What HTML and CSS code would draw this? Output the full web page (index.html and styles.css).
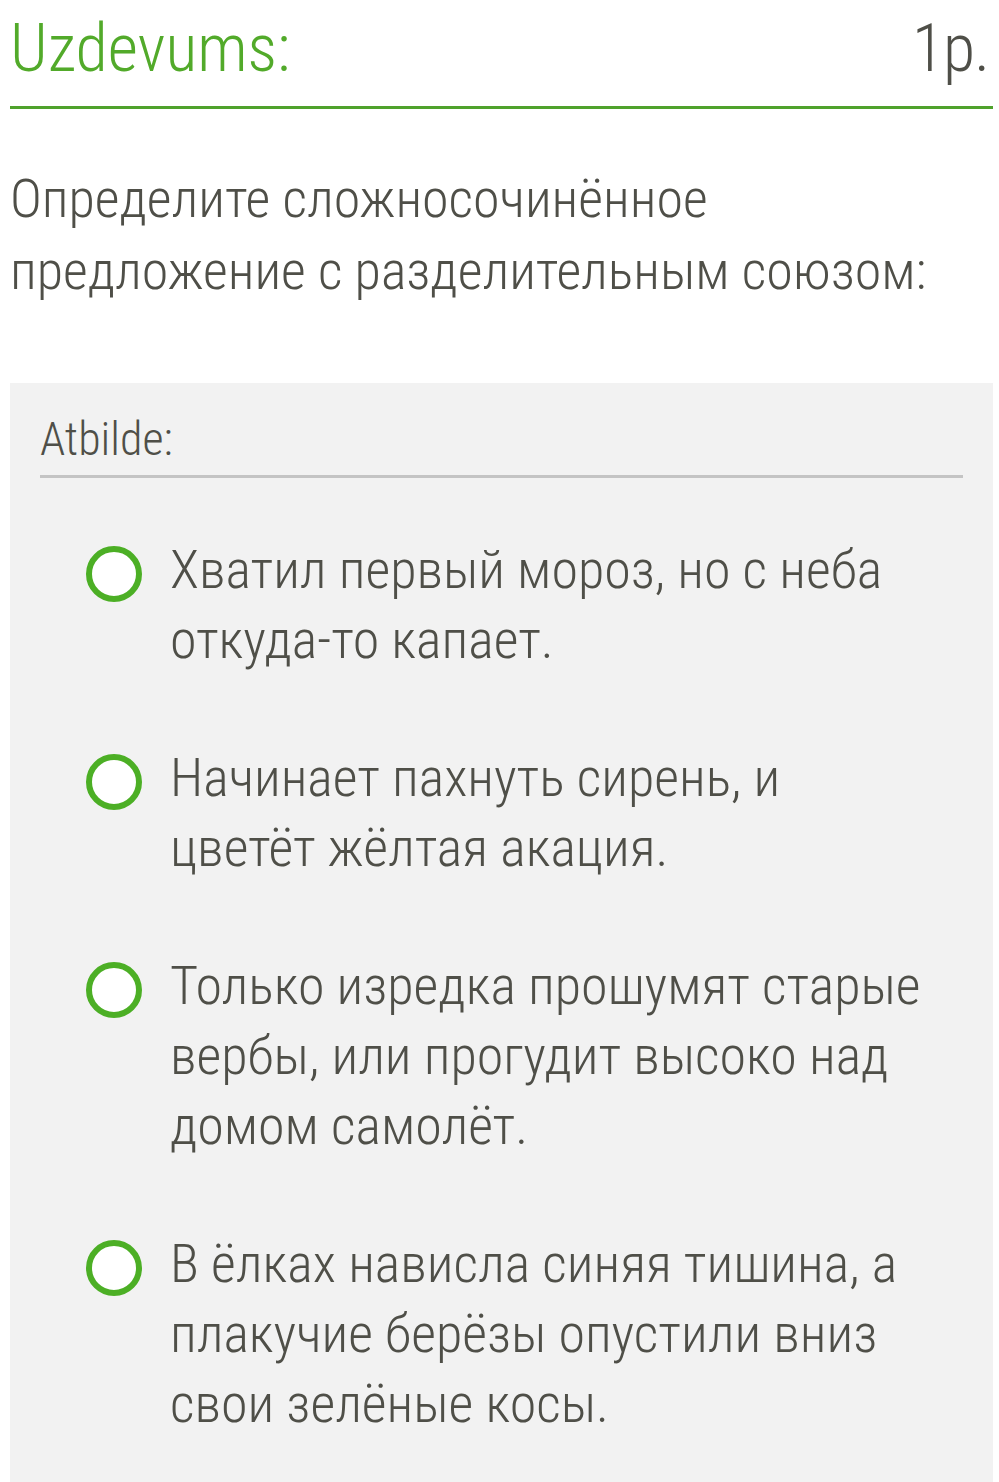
FILE: index.html
```html
<!DOCTYPE html>
<html lang="ru">
<head>
  <meta charset="UTF-8" />
  <meta name="viewport" content="width=device-width, initial-scale=1.0"/>
  <title>Uzdevums</title>
  <link rel="stylesheet" href="styles.css">
</head>
<body>

  <div class="page">
    <header class="task-head">
      <div class="task-title">Uzdevums:</div>
      <div class="task-points">1р.</div>
    </header>

    <div class="question">
      Определите сложносочинённое предложение с разделительным союзом:
    </div>

    <div class="answer-box">
      <div class="answer-label">Atbilde:</div>

      <div class="options">
        <label class="option">
          <span class="radio"></span>
          <span class="option-text">Хватил первый мороз, но с неба откуда-то капает.</span>
        </label>
        <label class="option">
          <span class="radio"></span>
          <span class="option-text">Начинает пахнуть сирень, и цветёт жёлтая акация.</span>
        </label>
        <label class="option">
          <span class="radio"></span>
          <span class="option-text">Только изредка прошумят старые вербы, или прогудит высоко над домом самолёт.</span>
        </label>
        <label class="option">
          <span class="radio"></span>
          <span class="option-text">В ёлках нависла синяя тишина, а плакучие берёзы опустили вниз свои зелёные косы.</span>
        </label>
      </div>
    </div>
  </div>

</body>
</html>
```

FILE: styles.css
```css
body {
  margin: 0;
  font-family: "Roboto Condensed", Roboto, "Liberation Sans", sans-serif;
  font-weight: 300;
  color: #4f4f48;
  background: #fff;
}

.page {
  padding: 0 6px 0 10px;
}

.task-head {
  display: flex;
  justify-content: space-between;
  align-items: flex-start;
  height: 109px;
  border-bottom: 3px solid #4fa22c;
  box-sizing: border-box;
}

.task-title {
  font-size: 66px;
  line-height: 98px;
  color: #52aa2a;
}

.task-points {
  font-size: 66px;
  line-height: 98px;
  letter-spacing: -1px;
  padding-right: 4px;
}

.question {
  font-size: 54px;
  line-height: 72px;
  padding: 54px 0 76px;
}

.answer-box {
  background: #f2f2f2;
  padding: 20px 30px 40px;
  min-height: 1100px;
}

.answer-label {
  font-size: 46px;
  line-height: 72px;
  border-bottom: 3px solid #c4c4c4;
}

.options {
  padding: 57px 30px 0 46px;
  display: flex;
  flex-direction: column;
  gap: 68px;
}

.option {
  display: flex;
  align-items: flex-start;
  gap: 28px;
}

.radio {
  flex: none;
  width: 44px;
  height: 44px;
  margin-top: 11px;
  border: 6px solid #4caf25;
  border-radius: 50%;
  background: #fff;
}

.option-text {
  font-size: 54px;
  line-height: 70px;
}
```
